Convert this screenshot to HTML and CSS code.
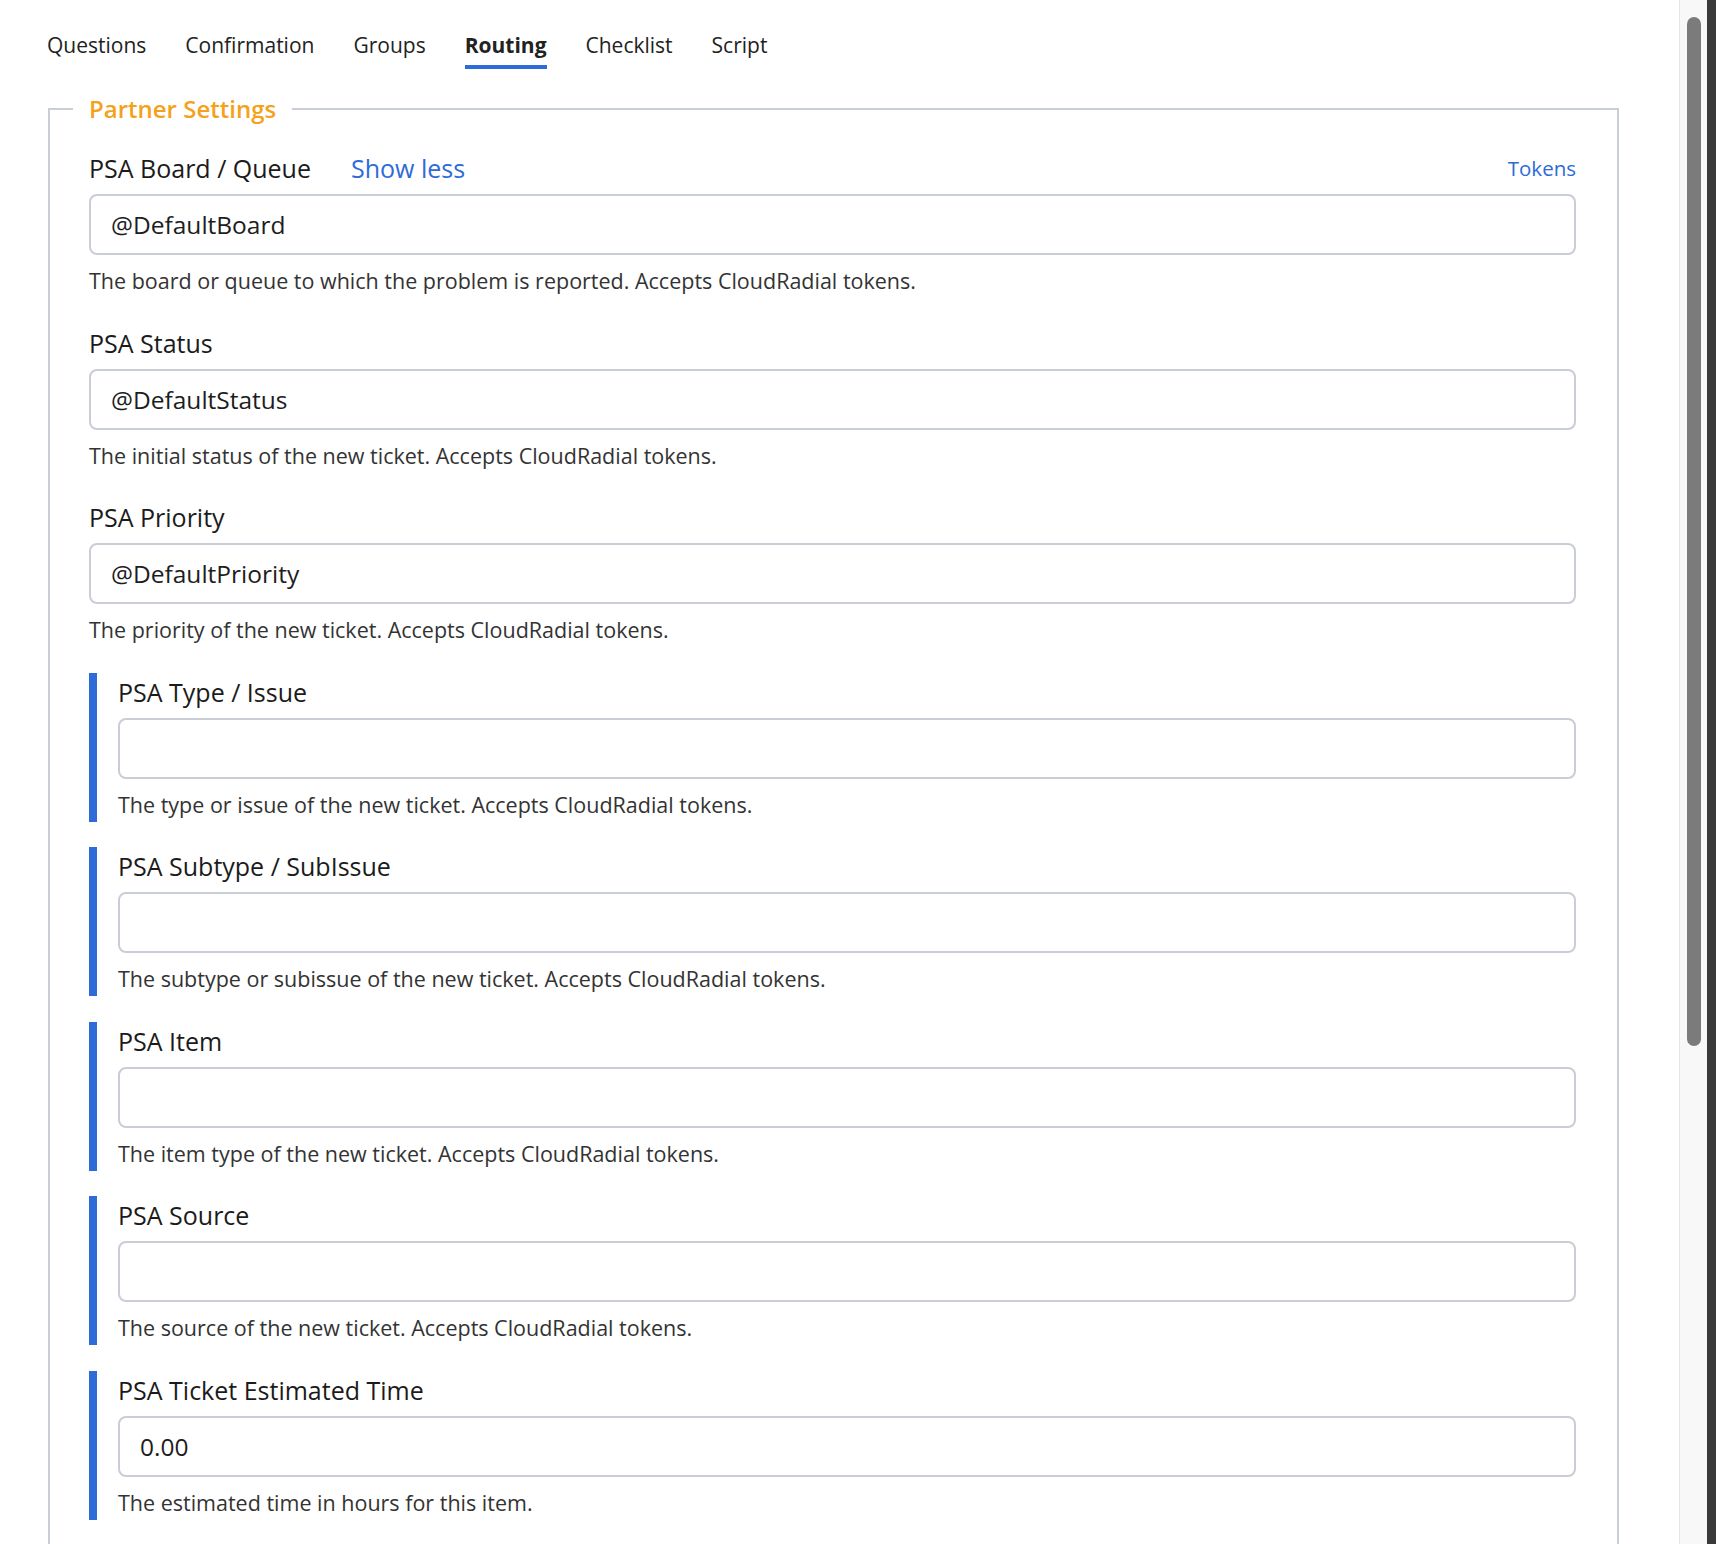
FILE: index.html
```html
<!DOCTYPE html>
<html lang="en">
<head>
  <meta charset="UTF-8">
  <meta name="viewport" content="width=device-width, initial-scale=1.0">
  <title>Routing - Partner Settings</title>
  <link rel="stylesheet" href="styles.css">
</head>
<body>
  <div class="page">
    <nav class="tabs">
      <a class="tab">Questions</a>
      <a class="tab">Confirmation</a>
      <a class="tab">Groups</a>
      <a class="tab active">Routing</a>
      <a class="tab">Checklist</a>
      <a class="tab">Script</a>
    </nav>

    <fieldset class="settings">
      <legend>Partner Settings</legend>

      <div class="field">
        <div class="label-row">
          <label for="psa-board">PSA Board / Queue</label>
          <a class="show-less">Show less</a>
          <a class="tokens">Tokens</a>
        </div>
        <input type="text" id="psa-board" value="@DefaultBoard">
        <p class="help">The board or queue to which the problem is reported. Accepts CloudRadial tokens.</p>
      </div>

      <div class="field">
        <label for="psa-status">PSA Status</label>
        <input type="text" id="psa-status" value="@DefaultStatus">
        <p class="help">The initial status of the new ticket. Accepts CloudRadial tokens.</p>
      </div>

      <div class="field">
        <label for="psa-priority">PSA Priority</label>
        <input type="text" id="psa-priority" value="@DefaultPriority">
        <p class="help">The priority of the new ticket. Accepts CloudRadial tokens.</p>
      </div>

      <div class="field extra">
        <label for="psa-type">PSA Type / Issue</label>
        <input type="text" id="psa-type">
        <p class="help">The type or issue of the new ticket. Accepts CloudRadial tokens.</p>
      </div>

      <div class="field extra">
        <label for="psa-subtype">PSA Subtype / SubIssue</label>
        <input type="text" id="psa-subtype">
        <p class="help">The subtype or subissue of the new ticket. Accepts CloudRadial tokens.</p>
      </div>

      <div class="field extra">
        <label for="psa-item">PSA Item</label>
        <input type="text" id="psa-item">
        <p class="help">The item type of the new ticket. Accepts CloudRadial tokens.</p>
      </div>

      <div class="field extra">
        <label for="psa-source">PSA Source</label>
        <input type="text" id="psa-source">
        <p class="help">The source of the new ticket. Accepts CloudRadial tokens.</p>
      </div>

      <div class="field extra">
        <label for="psa-time">PSA Ticket Estimated Time</label>
        <input type="text" id="psa-time" value="0.00">
        <p class="help">The estimated time in hours for this item.</p>
      </div>
    </fieldset>
  </div>

  <div class="scrollbar">
    <div class="thumb"></div>
  </div>
  <div class="edge"></div>
</body>
</html>
```

FILE: styles.css
```css
html, body {
  height: 1544px;
  overflow: hidden;
}
body {
  margin: 0;
  display: flex;
  background: #fff;
  font-family: "Open Sans", "Noto Sans", Arial, sans-serif;
  color: #1d1d1d;
}
.page {
  flex: 1;
  padding: 31px 60px 0 47px;
  overflow: hidden;
}
.tabs {
  display: flex;
  gap: 39px;
}
.tab {
  font-size: 21px;
  line-height: 28px;
  padding-bottom: 6px;
  border-bottom: 4px solid transparent;
  color: #222;
  cursor: pointer;
}
.tab.active {
  font-weight: bold;
  border-bottom-color: #2d6bd9;
}
.settings {
  margin: 23px 0 0 1px;
  padding: 23px 41px 40px 39px;
  border: 2px solid #c9cdd6;
  border-bottom: none;
}
.settings legend {
  margin-left: -16px;
  padding: 0 16px;
  font-size: 24px;
  line-height: 34px;
  font-weight: 600;
  color: #f4a21b;
}
.field {
  padding: 4px 0 3px;
  margin-bottom: 25.5px;
}
.field.extra {
  border-left: 8px solid #2d6bd9;
  padding-left: 21px;
}
.field label {
  display: block;
  font-size: 25px;
  line-height: 30px;
  color: #1b1b1b;
}
.label-row {
  display: flex;
  align-items: center;
}
.show-less {
  margin-left: 40px;
  font-size: 25px;
  line-height: 30px;
  color: #2d6bd9;
  cursor: pointer;
}
.tokens {
  margin-left: auto;
  font-size: 20.5px;
  color: #2d6bd9;
  cursor: pointer;
}
.field input {
  display: block;
  width: 100%;
  height: 61px;
  margin-top: 11px;
  padding: 0 20px;
  box-sizing: border-box;
  border: 2px solid #c9cdd6;
  border-radius: 8px;
  font-family: inherit;
  font-size: 24.5px;
  color: #1d1d1d;
  background: #fff;
}
.help {
  margin: 12px 0 0;
  font-size: 21.5px;
  line-height: 28px;
  color: #333;
}
.scrollbar {
  width: 28px;
  border-left: 1px solid #e6e6e6;
  background: #f8f8f8;
  padding: 17px 0 0 7px;
  box-sizing: border-box;
}
.thumb {
  width: 14px;
  height: 1029px;
  background: #7b7b7b;
  border-radius: 7px;
}
.edge {
  width: 9px;
  background: #3a3a3a;
}
```
